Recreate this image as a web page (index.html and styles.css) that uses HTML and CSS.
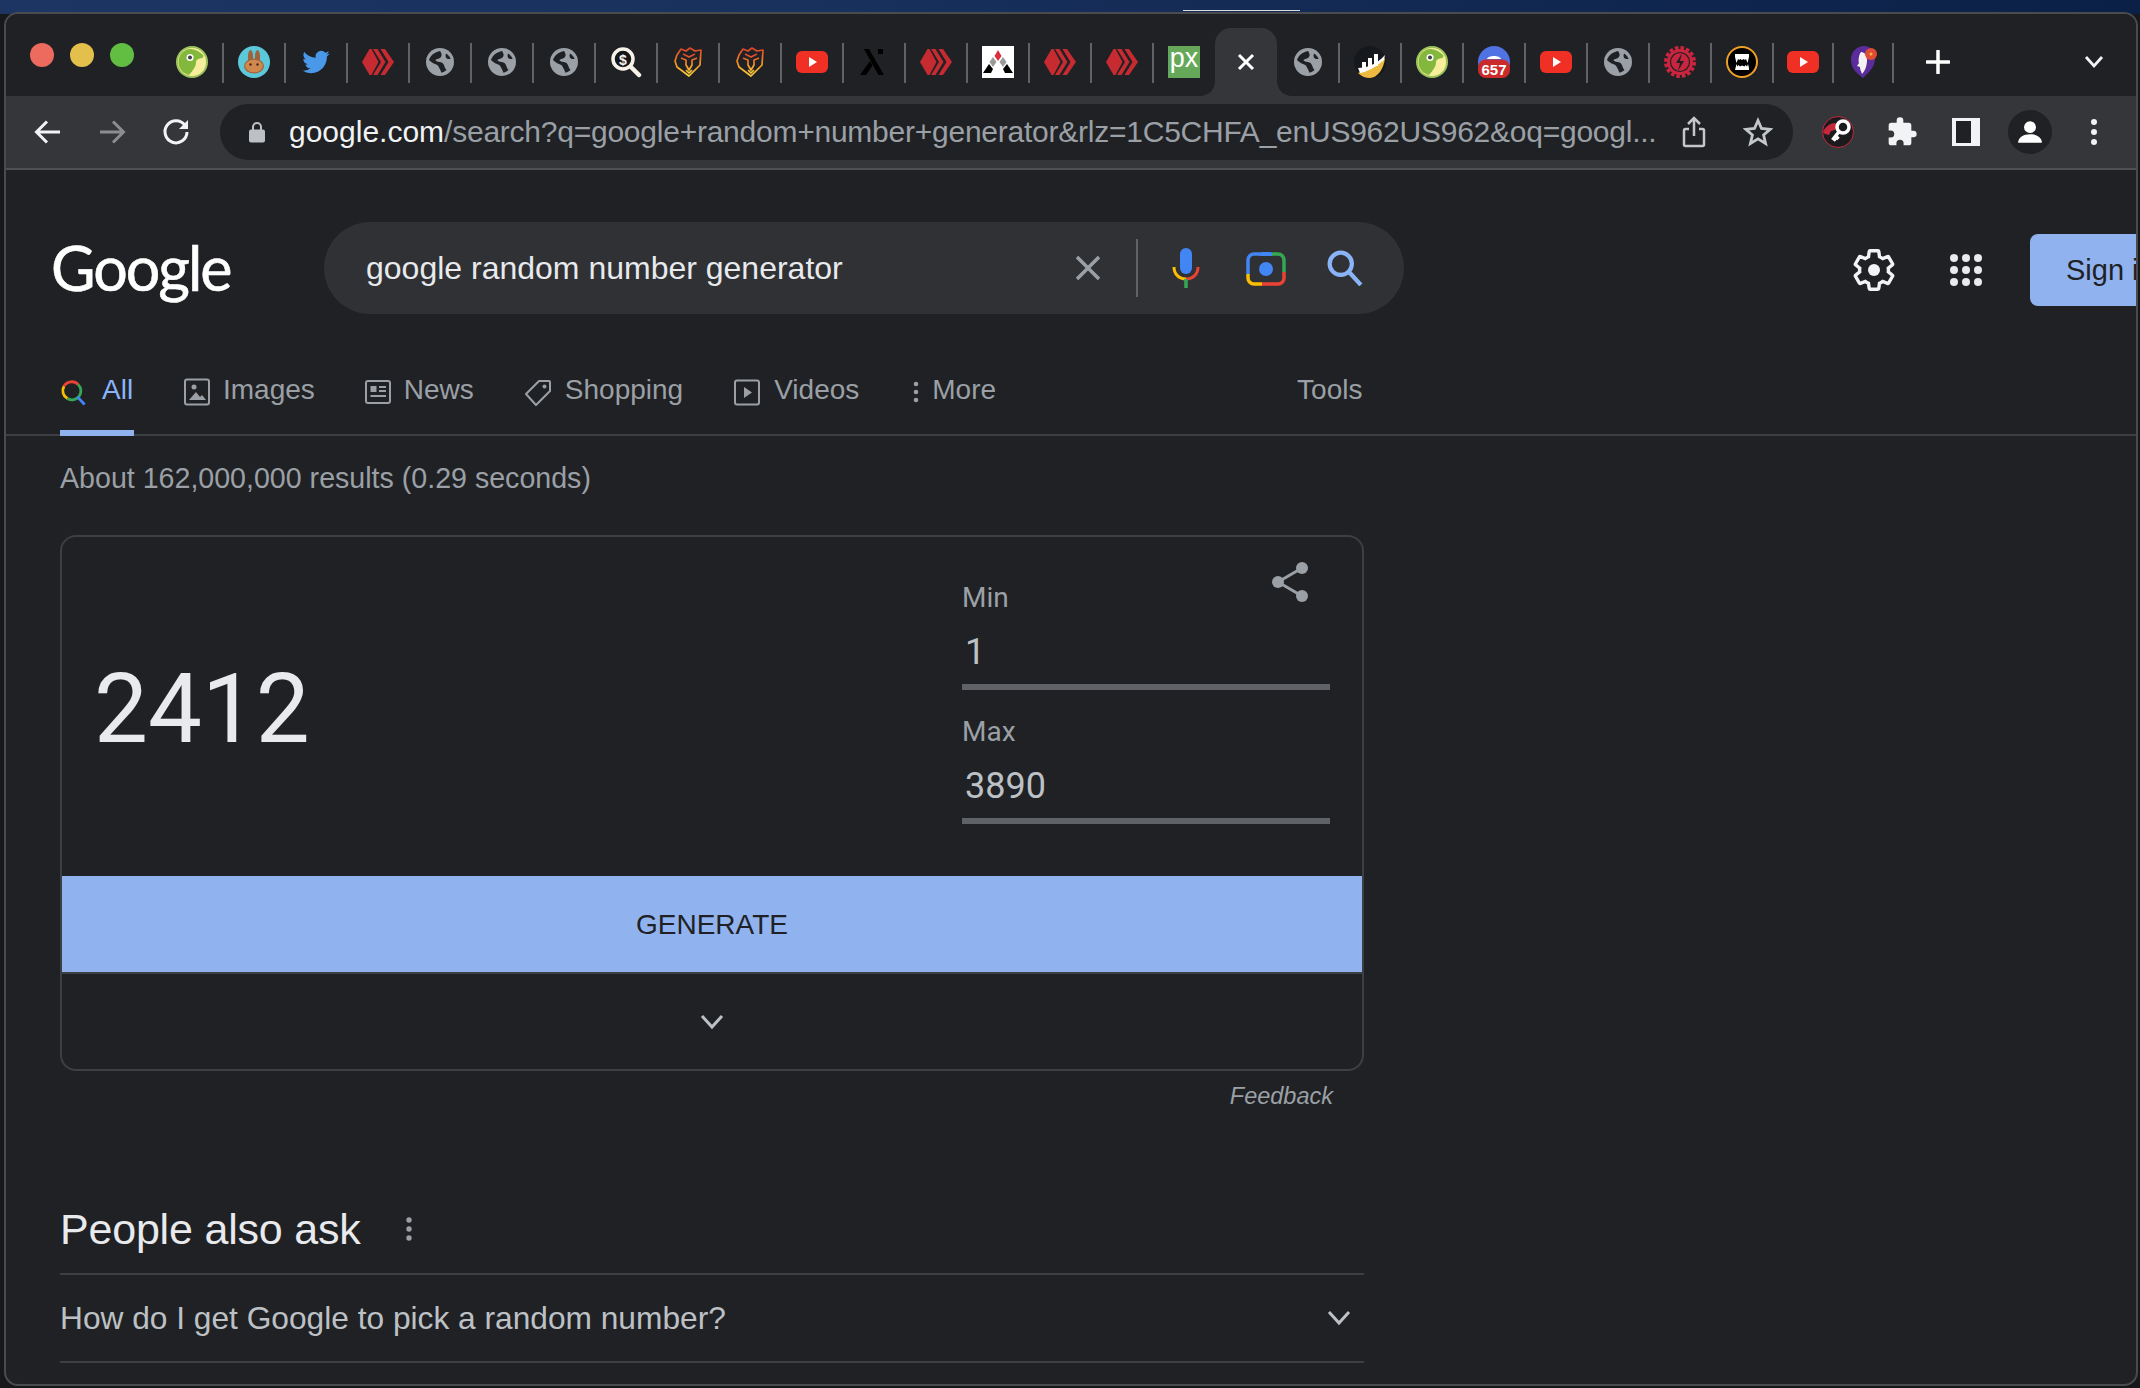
FILE: index.html
```html
<!DOCTYPE html>
<html lang="en">
<head>
<meta charset="utf-8">
<title>google random number generator - Google Search</title>
<link rel="stylesheet" href="styles.css">
</head>
<body>
<svg class="defs" aria-hidden="true">
  <defs>
    <linearGradient id="lionGrad" x1="0" y1="0" x2="0" y2="1">
      <stop offset="0" stop-color="#d8432a"/><stop offset="0.5" stop-color="#f08a24"/><stop offset="1" stop-color="#f7cf3c"/>
    </linearGradient>
    <symbol id="gecko" viewBox="0 0 32 32">
      <circle cx="16" cy="16" r="16" fill="#9cc25c"/><circle cx="16" cy="16" r="14" fill="#f6ee9c"/>
      <path d="M2.500 17C2 8 9 2.500 15 3c5 .4 9 3 12.500 6.500l-.5 2c-4 1.500-7 1.500-7 5 0 4-3 8-7 12.500C7 27.500 3 23 2.500 17Z" fill="#83b83c"/>
      <circle cx="14" cy="11.500" r="3.500" fill="#fff"/><circle cx="14" cy="11.500" r="2" fill="#444"/>
    </symbol>
    <symbol id="pancake" viewBox="0 0 32 32">
      <circle cx="16" cy="16" r="16" fill="#5cc9da"/>
      <ellipse cx="12.500" cy="11" rx="2.600" ry="7" fill="#a0623a"/><ellipse cx="19.500" cy="11" rx="2.600" ry="7" fill="#a0623a"/>
      <ellipse cx="16" cy="20" rx="10" ry="7.500" fill="#a0623a"/><ellipse cx="16" cy="20" rx="8.800" ry="6.300" fill="#d0884f"/>
      <circle cx="12.500" cy="18.500" r="1.200" fill="#44281a"/><circle cx="19.500" cy="18.500" r="1.200" fill="#44281a"/>
    </symbol>
    <symbol id="twitter" viewBox="-2 -2 28 28">
      <path fill="#4a99e9" d="M23.950 4.570a10 10 0 0 1-2.820.77 4.960 4.960 0 0 0 2.160-2.720c-.95.55-2 .96-3.130 1.200a4.920 4.920 0 0 0-8.390 4.480C7.690 8.100 4.070 6.130 1.640 3.160a4.920 4.920 0 0 0 1.520 6.570 4.900 4.900 0 0 1-2.230-.61v.06a4.920 4.920 0 0 0 3.950 4.830 5 5 0 0 1-2.210.08 4.940 4.940 0 0 0 4.600 3.420A9.870 9.870 0 0 1 0 19.540a13.940 13.940 0 0 0 7.550 2.210c9.050 0 14-7.500 14-13.980 0-.21 0-.42-.02-.63a9.940 9.940 0 0 0 2.460-2.570z"/>
    </symbol>
    <symbol id="hive" viewBox="0 0 32 32">
      <polygon fill="#c52b30" points="0,16 7.500,3 9.500,3 16.500,16 9.500,29 7.500,29"/>
      <polygon fill="#c52b30" points="11,3 15.500,3 23.500,16 15.500,29 11,29 19,16"/>
      <polygon fill="#c52b30" points="18.500,3 23,3 32,16 23,29 18.500,29 26.500,16"/>
    </symbol>
    <symbol id="globe" viewBox="0 0 32 32">
      <circle cx="16" cy="16" r="14" fill="#9aa0a6"/>
      <path fill="#202124" d="M5 14C6.500 9 11 6 16 5c1.500 2 2.500 4.500.5 6.500-2 1.800-4.500 1-5 3 2 2 5.500.8 7.500 3 1.600 2 1.500 4.500 3.500 6.500-1.500 1.300-3.200 2.200-5 2.700-1-2.500-2-4.700-3.300-6.700C13 18 8.500 18 5 14Z"/>
      <path fill="#202124" d="M22 7.500c2 1.200 3.700 3 4.700 5.200-1.700.4-3.700.3-4.700-1-.7-1.200-.5-2.800 0-4.200Z"/>
    </symbol>
    <symbol id="dollar" viewBox="0 0 32 32">
      <circle cx="13" cy="13" r="10" fill="#15161a" stroke="#f7f2e8" stroke-width="3.500"/>
      <path d="M21 21l8 8" stroke="#f7f2e8" stroke-width="4.500" stroke-linecap="round"/>
      <text x="13" y="18.500" text-anchor="middle" class="svg-dollar">$</text>
    </symbol>
    <symbol id="lion" viewBox="0 0 32 32">
      <g fill="none" stroke="url(#lionGrad)" stroke-width="1.700" stroke-linejoin="round">
        <path d="M5 9 9 3l5 2 4-3 5 3 6-1-1 15-11 11L5 21l-2-6Z"/>
        <path d="M9 12l5 2v5l3 5 3-5v-5l5-2M11 8l6 3 6-3M14 24l3 3 3-3"/>
      </g>
    </symbol>
    <symbol id="yt" viewBox="0 0 32 32">
      <rect x="0" y="5" width="32" height="22" rx="6" fill="#f03024"/>
      <polygon points="13,11 13,21 21,16" fill="#fff"/>
    </symbol>
    <symbol id="xglyph" viewBox="0 0 32 32">
      <path d="M6 3h5l15 26h-5.500L6 3Z" fill="#000"/><path d="M2 29l10-14 2.500 4.500L8 29H2Z" fill="#000"/><rect x="20" y="3" width="5" height="5" fill="#000"/>
    </symbol>
    <symbol id="arc" viewBox="0 0 32 32">
      <rect width="32" height="32" fill="#fff"/>
      <polygon points="16,4 19.500,10 16,15 12.500,10" fill="#d9303c"/>
      <polygon points="11,11 14.500,16 11,21 7.500,16" fill="#9a9a9a"/><polygon points="21,11 24.500,16 21,21 17.500,16" fill="#9a9a9a"/>
      <polygon points="7,18 11,23 9,27 1,27" fill="#000"/><polygon points="25,18 21,23 23,27 31,27" fill="#000"/>
    </symbol>
    <symbol id="px" viewBox="0 0 32 32">
      <rect width="32" height="32" fill="#66a85a"/>
      <text x="16" y="21" text-anchor="middle" class="svg-px">px</text>
    </symbol>
    <symbol id="chart" viewBox="0 0 32 32">
      <circle cx="16" cy="16" r="16" fill="#15181c"/>
      <path d="M4 27c9-3 17-7 27-15-1 11-8 20-15 20-5 0-9-2-12-5Z" fill="#edb93e"/>
      <path d="M4 22c8 0 18-3 27-13l-1 5C22 21 13 26 6 27Z" fill="#fff"/>
      <rect x="8" y="16" width="4" height="8" fill="#fff"/><rect x="14" y="12" width="4" height="11" fill="#fff"/><rect x="20" y="8" width="4" height="12" fill="#fff"/>
    </symbol>
    <symbol id="count" viewBox="0 0 32 32">
      <circle cx="16" cy="16" r="16" fill="#4f73e3"/>
      <path d="M9 13c1-4 13-4 14 0Z" fill="#fff"/>
      <rect y="13.500" width="32" height="18.500" rx="8" fill="#cb2a2b"/>
      <text x="16" y="29" text-anchor="middle" class="svg-count">657</text>
    </symbol>
    <symbol id="bolt" viewBox="0 0 32 32">
      <circle cx="16" cy="16" r="14" fill="none" stroke="#c9253f" stroke-width="4" stroke-dasharray="3.500 2"/>
      <circle cx="16" cy="16" r="13" fill="#c9253f"/><circle cx="16" cy="16" r="9.500" fill="none" stroke="#202124" stroke-width="1.200"/>
      <path d="M18 7l-6 10h4l-2 8 6-10h-4Z" fill="#202124"/>
    </symbol>
    <symbol id="monster" viewBox="0 0 32 32">
      <circle cx="16" cy="16" r="15" fill="#000" stroke="#f0a028" stroke-width="2"/>
      <path d="M9 8h14v3l-1.500 6-1.500-4-1.200 1-1-1-1.800 1-1.800-1-1 1-1.200-1L10.500 17 9 11Z" fill="#fff"/>
      <path d="M9 24h14v-2l-1-4-1 2.500-1.500-1.500-1 1.500-2.500-1-2 1-1.500-1.500-1 1.500-1-2.500-1 4Z" fill="#fff"/>
    </symbol>
    <symbol id="woman" viewBox="0 0 32 32">
      <path d="M16 32C8 26 4 22 4 13 4 6 10 0 17 0c7 0 11 6 11 13 0 8-6 13-12 19Z" fill="#5b2d9c"/>
      <path d="M14 6c4 0 6 4 6 8 0 6-2 11-5 14-1-3-2-4-2-7l-3-1 2-3c-1-2 0-9 2-11Z" fill="#f5f1f3"/>
      <circle cx="24" cy="8" r="6" fill="#df4c34"/><circle cx="24" cy="8" r="1.500" fill="#f4b04a"/>
    </symbol>
    <symbol id="key" viewBox="0 0 32 32">
      <circle cx="16" cy="16" r="15.500" fill="#1b1b1e" stroke="#c4283a" stroke-width="1"/>
      <path d="M1 16c2-5 7-9 12-9l3 3-3 4-4 1-2 4-4-1Z" fill="#c4283a"/>
      <circle cx="21" cy="11" r="6" fill="none" stroke="#fff" stroke-width="3.500"/>
      <path d="M17.500 15l-7 9m3-4 3 3m-5-1 2.500 2.500" stroke="#fff" stroke-width="3.500" fill="none"/>
    </symbol>
  </defs>
</svg>

<div class="desk-mark"></div>

<div class="window">
  <header class="tabstrip">
    <div class="lights"><span class="light red"></span><span class="light amber"></span><span class="light green"></span></div>
    <div class="tabs">
      <div class="tab"><svg class="fav"><use href="#gecko"/></svg></div>
      <div class="tab"><svg class="fav"><use href="#pancake"/></svg></div>
      <div class="tab"><svg class="fav"><use href="#twitter"/></svg></div>
      <div class="tab"><svg class="fav"><use href="#hive"/></svg></div>
      <div class="tab"><svg class="fav"><use href="#globe"/></svg></div>
      <div class="tab"><svg class="fav"><use href="#globe"/></svg></div>
      <div class="tab"><svg class="fav"><use href="#globe"/></svg></div>
      <div class="tab"><svg class="fav"><use href="#dollar"/></svg></div>
      <div class="tab"><svg class="fav"><use href="#lion"/></svg></div>
      <div class="tab"><svg class="fav"><use href="#lion"/></svg></div>
      <div class="tab"><svg class="fav"><use href="#yt"/></svg></div>
      <div class="tab"><svg class="fav"><use href="#xglyph"/></svg></div>
      <div class="tab"><svg class="fav"><use href="#hive"/></svg></div>
      <div class="tab"><svg class="fav"><use href="#arc"/></svg></div>
      <div class="tab"><svg class="fav"><use href="#hive"/></svg></div>
      <div class="tab"><svg class="fav"><use href="#hive"/></svg></div>
      <div class="tab no-sep"><svg class="fav"><use href="#px"/></svg></div>
      <div class="tab active no-sep"><svg class="tab-close" viewBox="0 0 20 20"><path d="M3 3l14 14M17 3L3 17"/></svg></div>
      <div class="tab"><svg class="fav"><use href="#globe"/></svg></div>
      <div class="tab"><svg class="fav"><use href="#chart"/></svg></div>
      <div class="tab"><svg class="fav"><use href="#gecko"/></svg></div>
      <div class="tab"><svg class="fav"><use href="#count"/></svg></div>
      <div class="tab"><svg class="fav"><use href="#yt"/></svg></div>
      <div class="tab"><svg class="fav"><use href="#globe"/></svg></div>
      <div class="tab"><svg class="fav"><use href="#bolt"/></svg></div>
      <div class="tab"><svg class="fav"><use href="#monster"/></svg></div>
      <div class="tab narrow"><svg class="fav"><use href="#yt"/></svg></div>
      <div class="tab narrow"><svg class="fav"><use href="#woman"/></svg></div>
    </div>
    <svg class="newtab" viewBox="0 0 24 24"><path d="M12 1v22M1 12h22"/></svg>
    <svg class="tablist" viewBox="0 0 20 14"><path d="M2 2l8 9 8-9"/></svg>
  </header>

  <nav class="toolbar">
    <div class="tb-btn"><svg class="tb-ico" viewBox="0 0 28 28"><path class="st-w" d="M26 14H3M13 3.500 2.500 14 13 24.500"/></svg></div>
    <div class="tb-btn"><svg class="tb-ico" viewBox="0 0 28 28"><path class="st-g" d="M2 14h23M15 3.500 25.500 14 15 24.500"/></svg></div>
    <div class="tb-btn"><svg class="tb-ico" viewBox="0 0 28 28"><path class="st-w" d="M23 7.500A11 11 0 1 0 25 14"/><polygon points="26,2 26,11 17,11" fill="#f1f3f4"/></svg></div>
    <div class="omnibox">
      <svg class="lock" viewBox="0 0 16 22"><path d="M4 9V6a4 4 0 0 1 8 0v3" fill="none" stroke="#bdc1c6" stroke-width="2"/><rect y="8.500" width="16" height="13" rx="2" fill="#bdc1c6"/></svg>
      <div class="url"><span class="url-host">google.com</span>/search?q=google+random+number+generator&amp;rlz=1C5CHFA_enUS962US962&amp;oq=googl...</div>
      <svg class="omni-share" viewBox="0 0 24 32"><path d="M12 20V2M6 8l6-6 6 6M7 13H3.500A1.500 1.500 0 0 0 2 14.500v14A1.500 1.500 0 0 0 3.500 30h17a1.500 1.500 0 0 0 1.500-1.500v-14a1.500 1.500 0 0 0-1.500-1.500H17"/></svg>
      <svg class="omni-star" viewBox="0 0 30 30"><path d="M15 3.500l3.500 8 8.700.8-6.600 5.700 2 8.500L15 21.900 7.400 26.500l2-8.500-6.600-5.700 8.700-.8Z"/></svg>
    </div>
    <div class="tb-right">
      <div class="tb-btn"><svg class="fav"><use href="#key"/></svg></div>
      <div class="tb-btn"><svg class="tb-puzzle" viewBox="0 0 24 24"><path fill="#f1f3f4" d="M20.500 11H19V7a2 2 0 0 0-2-2h-4V3.500a2.500 2.500 0 0 0-5 0V5H4a2 2 0 0 0-2 2v3.800h1.500a2.700 2.700 0 0 1 0 5.400H2V20a2 2 0 0 0 2 2h3.800v-1.500a2.700 2.700 0 0 1 5.400 0V22H17a2 2 0 0 0 2-2v-4h1.500a2.500 2.500 0 0 0 0-5Z"/></svg></div>
      <div class="tb-btn"><div class="panel-ico"></div></div>
      <div class="tb-btn"><div class="avatar"><svg class="avatar-ico" viewBox="0 0 24 24"><circle cx="12" cy="7.500" r="5.500" fill="#fff"/><path d="M1 22c0-5 5-8 11-8s11 3 11 8Z" fill="#fff"/></svg></div></div>
      <div class="tb-btn"><svg class="tb-dots" viewBox="0 0 8 28"><circle cx="4" cy="4" r="3"/><circle cx="4" cy="14" r="3"/><circle cx="4" cy="24" r="3"/></svg></div>
    </div>
  </nav>

  <main class="page">
    <div class="search-row">
      <div class="logo">Google</div>
      <div class="searchbox">
        <div class="query">google random number generator</div>
        <svg class="clear" viewBox="0 0 28 28"><path d="M3 3l22 22M25 3 3 25"/></svg>
        <div class="sb-divider"></div>
        <svg class="mic" viewBox="0 0 28 40">
          <rect x="8" y="0" width="12" height="26" rx="6" fill="#4285f4"/>
          <path d="M2 19c0 7 5 12 12 12" fill="none" stroke="#fbbc04" stroke-width="3"/>
          <path d="M26 19c0 7-5 12-12 12" fill="none" stroke="#ea4335" stroke-width="3"/>
          <path d="M14 31v9" stroke="#34a853" stroke-width="3.500"/>
        </svg>
        <svg class="lens" viewBox="0 0 40 36">
          <path d="M13 6l3-4h8l3 4Z" fill="#4285f4"/>
          <path d="M2 24V10a6 6 0 0 1 6-6h6" fill="none" stroke="#4285f4" stroke-width="3.500"/>
          <path d="M14 4h12" stroke="#4285f4" stroke-width="3.500"/>
          <path d="M26 4h6a6 6 0 0 1 6 6v12" fill="none" stroke="#34a853" stroke-width="3.500"/>
          <path d="M2 24v4a6 6 0 0 0 6 6h8" fill="none" stroke="#fbbc04" stroke-width="3.500"/>
          <path d="M16 34h16a6 6 0 0 0 6-6v-6" fill="none" stroke="#ea4335" stroke-width="3.500"/>
          <circle cx="20" cy="19" r="7" fill="#4285f4"/>
        </svg>
        <svg class="sb-search" viewBox="0 0 34 34"><circle cx="13" cy="13" r="10.500" fill="none"/><path d="M21 21l11 12"/></svg>
      </div>
      <div class="header-tools">
        <svg class="gear" viewBox="0 0 24 24"><path d="M19.140 12.940c.04-.3.06-.61.06-.94 0-.32-.02-.64-.07-.94l2.030-1.580c.18-.14.23-.41.12-.61l-1.920-3.320c-.12-.22-.37-.29-.59-.22l-2.390.96c-.5-.38-1.030-.7-1.620-.94l-.36-2.540c-.04-.24-.24-.41-.48-.41h-3.840c-.24 0-.43.17-.47.41l-.36 2.540c-.59.24-1.130.57-1.620.94l-2.390-.96c-.22-.08-.47 0-.59.22L2.740 8.870c-.12.21-.08.47.12.61l2.030 1.580c-.05.3-.09.63-.09.94s.02.64.07.94l-2.030 1.580c-.18.14-.23.41-.12.61l1.920 3.320c.12.22.37.29.59.22l2.390-.96c.5.38 1.030.7 1.620.94l.36 2.540c.05.24.24.41.48.41h3.840c.24 0 .44-.17.47-.41l.36-2.540c.59-.24 1.130-.56 1.620-.94l2.390.96c.22.08.47 0 .59-.22l1.920-3.320c.12-.22.07-.47-.12-.61l-2.010-1.580z"/><circle cx="12" cy="12" r="3" class="gear-core"/></svg>
        <svg class="apps" viewBox="0 0 32 32"><circle cx="4" cy="4" r="4"/><circle cx="16" cy="4" r="4"/><circle cx="28" cy="4" r="4"/><circle cx="4" cy="16" r="4"/><circle cx="16" cy="16" r="4"/><circle cx="28" cy="16" r="4"/><circle cx="4" cy="28" r="4"/><circle cx="16" cy="28" r="4"/><circle cx="28" cy="28" r="4"/></svg>
        <div class="signin">Sign in</div>
      </div>
    </div>

    <div class="gnav">
      <div class="nav-item current">
        <svg class="nav-ico" viewBox="0 0 28 28" fill="none" stroke-width="3"><path d="M4.300 7.800A9.500 9.500 0 0 1 19.500 6" stroke="#ea4335"/><path d="M4.300 7.800A9.500 9.500 0 0 0 8 21" stroke="#fbbc04"/><path d="M19.500 6A9.500 9.500 0 0 1 8 21" stroke="#34a853"/><path d="M18.500 19l8 8.500" stroke="#4285f4"/></svg>
        <span>All</span>
      </div>
      <div class="nav-item">
        <svg class="nav-ico" viewBox="0 0 26 28" fill="none" stroke="#9aa0a6" stroke-width="2"><rect x="1" y="1.500" width="24" height="25" rx="2"/><circle cx="10" cy="9" r="2.500" fill="#9aa0a6" stroke="none"/><path d="M5 22l7-8 4 5 2-2 4 5Z" fill="#9aa0a6" stroke="none"/></svg>
        <span>Images</span>
      </div>
      <div class="nav-item">
        <svg class="nav-ico" viewBox="0 0 26 28" fill="none" stroke="#9aa0a6" stroke-width="2"><rect x="1" y="3" width="24" height="22" rx="2"/><rect x="5.500" y="8" width="6" height="6" fill="#9aa0a6" stroke="none"/><path d="M14 9h7M14 13h7M5.500 18h15.500"/></svg>
        <span>News</span>
      </div>
      <div class="nav-item">
        <svg class="nav-ico tag" viewBox="0 0 28 28" fill="none" stroke="#9aa0a6" stroke-width="2"><path d="M2 16 15 3h10a1 1 0 0 1 1 1v9L12 27Z" stroke-linejoin="round"/><circle cx="20.500" cy="8.500" r="2" fill="#9aa0a6" stroke="none"/></svg>
        <span>Shopping</span>
      </div>
      <div class="nav-item videos">
        <svg class="nav-ico" viewBox="0 0 26 28" fill="none" stroke="#9aa0a6" stroke-width="2"><rect x="1" y="2.500" width="24" height="24" rx="2"/><polygon points="10,9 10,20 18,14.500" fill="#9aa0a6" stroke="none"/></svg>
        <span>Videos</span>
      </div>
      <div class="nav-item more">
        <svg class="nav-dots" viewBox="0 0 6 24"><circle cx="3" cy="4" r="2.300"/><circle cx="3" cy="12" r="2.300"/><circle cx="3" cy="20" r="2.300"/></svg>
        <span>More</span>
      </div>
      <div class="nav-item tools"><span>Tools</span></div>
    </div>

    <div class="content">
      <div class="stats">About 162,000,000 results (0.29 seconds)</div>

      <section class="card">
        <svg class="rng-share" viewBox="0 0 36 40"><path d="M6 20 30 6M6 20l24 14"/><circle cx="6" cy="20" r="6"/><circle cx="30" cy="6" r="6"/><circle cx="30" cy="34" r="6"/></svg>
        <div class="rng-top">
          <div class="rng-value">2412</div>
          <div class="rng-inputs">
            <div class="field-label">Min</div>
            <div class="field-value">1</div>
            <div class="field-label second">Max</div>
            <div class="field-value">3890</div>
          </div>
        </div>
        <div class="generate">GENERATE</div>
        <div class="rng-foot"><svg class="chev" viewBox="0 0 24 16"><path d="M2 2l10 11L22 2"/></svg></div>
      </section>
      <div class="feedback">Feedback</div>

      <div class="paa-head">
        <h2 class="paa-title">People also ask</h2>
        <svg class="paa-dots" viewBox="0 0 6 24"><circle cx="3" cy="3" r="2.700"/><circle cx="3" cy="12" r="2.700"/><circle cx="3" cy="21" r="2.700"/></svg>
      </div>
      <div class="paa-row">
        <span>How do I get Google to pick a random number?</span>
        <svg class="paa-chev" viewBox="0 0 24 16"><path d="M2 2l10 11L22 2"/></svg>
      </div>
    </div>
  </main>
</div>
</body>
</html>
```

FILE: styles.css
```css
* { box-sizing: border-box; }
html, body { margin: 0; height: 100%; }
body {
  width: 2140px;
  height: 1388px;
  overflow: hidden;
  padding: 12px 0 0 4px;
  font-family: "Liberation Sans", Arial, sans-serif;
  background:
    linear-gradient(90deg, #1d3563 0%, #17305c 40%, #0b2046 100%) top / 100% 14px no-repeat,
    #17181b;
}
.defs { position: absolute; width: 0; height: 0; }
.svg-dollar { font: 700 14px "Liberation Sans", sans-serif; fill: #f7f2e8; }
.svg-px { font: 400 27px "Liberation Sans", sans-serif; fill: #fff; }
.svg-count { font: 700 15px "Liberation Sans", sans-serif; fill: #fff; }
.desk-mark { position: absolute; left: 1183px; top: 10px; width: 117px; height: 1px; background: #d8dce0; }

.window {
  width: 2134px;
  height: 1374px;
  border: 2px solid #4a4b4f;
  border-radius: 14px;
  overflow: hidden;
  display: flex;
  flex-direction: column;
  background: #202124;
}

/* Tab strip */
.tabstrip {
  height: 82px;
  flex: none;
  background: #202124;
  display: flex;
  align-items: flex-end;
  padding-left: 24px;
}
.lights { display: flex; gap: 16px; width: 131px; height: 68px; align-items: center; margin-bottom: 7px; flex: none; }
.light { width: 24px; height: 24px; border-radius: 50%; }
.red { background: #ec6a5e; }
.amber { background: #e3bf4b; }
.green { background: #62be43; }
.tabs { display: flex; flex: none; }
.tab {
  width: 62px;
  height: 68px;
  position: relative;
  display: flex;
  align-items: center;
  justify-content: center;
  flex: none;
}
.tab::after {
  content: "";
  position: absolute;
  right: -1px;
  top: 15px;
  width: 2px;
  height: 40px;
  background: #5f6368;
}
.tab.no-sep::after { display: none; }
.tab.narrow { width: 60px; }
.fav { width: 32px; height: 32px; display: block; }
.tab.active {
  background: #35363a;
  border-radius: 16px 16px 0 0;
}
.tab.active::before {
  content: "";
  position: absolute;
  left: -14px;
  bottom: 0;
  width: 14px;
  height: 14px;
  background: radial-gradient(circle at 0 0, transparent 13.500px, #35363a 14px);
}
.tab.active::after {
  display: block;
  left: 100%;
  right: auto;
  top: auto;
  bottom: 0;
  width: 14px;
  height: 14px;
  background: radial-gradient(circle at 100% 0, transparent 13.500px, #35363a 14px);
}
.tab-close { width: 20px; height: 20px; fill: none; stroke: #fff; stroke-width: 3; }
.newtab { width: 24px; height: 24px; margin: 0 0 22px 33px; flex: none; fill: none; stroke: #fff; stroke-width: 3.500; stroke-linecap: round; }
.tablist { width: 20px; height: 14px; margin: 0 0 27px 134px; flex: none; fill: none; stroke: #f1f3f4; stroke-width: 2.800; }

/* Toolbar */
.toolbar {
  height: 74px;
  flex: none;
  background: #35363a;
  border-bottom: 2px solid #4e4f53;
  display: flex;
  align-items: center;
  padding-left: 10px;
}
.tb-btn { width: 64px; height: 48px; display: flex; align-items: center; justify-content: center; flex: none; }
.tb-ico { width: 28px; height: 28px; }
.tb-puzzle { width: 32px; height: 32px; }
.st-w, .st-g { fill: none; stroke-width: 3; }
.st-w { stroke: #f1f3f4; }
.st-g { stroke: #8b8d90; }
.omnibox {
  width: 1573px;
  height: 56px;
  margin-left: 12px;
  flex: none;
  background: #202124;
  border-radius: 28px;
  display: flex;
  align-items: center;
  padding-left: 29px;
}
.lock { width: 16px; height: 22px; flex: none; }
.url {
  margin-left: 24px;
  width: 1365px;
  flex: none;
  font-size: 30px;
  letter-spacing: -0.240px;
  white-space: nowrap;
  color: #9aa0a6;
}
.url-host { color: #f1f3f4; letter-spacing: 0; }
.omni-share { width: 24px; height: 32px; margin-left: 28px; flex: none; fill: none; stroke: #c4c7c9; stroke-width: 2.500; }
.omni-star { width: 30px; height: 30px; margin-left: 37px; flex: none; fill: none; stroke: #c4c7c9; stroke-width: 2.800; }
.tb-right { display: flex; margin-left: 13px; flex: none; }
.panel-ico { width: 28px; height: 28px; background: #202124; border: solid #f1f3f4; border-width: 3px 9px 3px 4px; }
.avatar { width: 44px; height: 44px; border-radius: 50%; background: #202124; display: flex; align-items: center; justify-content: center; flex: none; }
.avatar-ico { width: 26px; height: 26px; }
.tb-dots { width: 8px; height: 28px; fill: #f1f3f4; }

/* Page */
.page { flex: 1; min-height: 0; color: #bdc1c6; }
.search-row { display: flex; align-items: center; padding: 52px 0 0 45px; height: 144px; }
.logo {
  width: 273px;
  flex: none;
  font-family: "Lato", sans-serif;
  font-size: 61px;
  line-height: 76px;
  letter-spacing: -2px;
  color: #fff;
  -webkit-text-stroke: 0.6px #fff;
}
.searchbox {
  width: 1080px;
  height: 92px;
  flex: none;
  background: #303134;
  border-radius: 46px;
  display: flex;
  align-items: center;
  padding-left: 42px;
}
.query { width: 708px; flex: none; font-size: 32px; color: #e8eaed; white-space: nowrap; }
.clear { width: 28px; height: 28px; flex: none; fill: none; stroke: #9aa0a6; stroke-width: 3.500; }
.sb-divider { width: 2px; height: 58px; margin-left: 34px; background: #5f6368; flex: none; }
.mic { width: 28px; height: 40px; margin-left: 34px; flex: none; }
.lens { width: 40px; height: 36px; margin-left: 46px; flex: none; }
.sb-search { width: 36px; height: 36px; margin-left: 41px; flex: none; fill: none; stroke: #8ab4f8; stroke-width: 4; }
.header-tools { display: flex; align-items: center; margin: 4px 0 0 446px; flex: none; }
.gear { width: 48px; height: 48px; flex: none; fill: none; stroke: #f1f3f4; stroke-width: 1.700; }
.gear-core { fill: #f1f3f4; stroke: none; }
.apps { width: 32px; height: 32px; margin-left: 52px; flex: none; fill: #e8eaed; }
.signin {
  width: 146px;
  height: 72px;
  margin-left: 48px;
  flex: none;
  background: #90b3f0;
  border-radius: 8px;
  color: #202124;
  font-size: 29px;
  line-height: 72px;
  padding-left: 36px;
  white-space: nowrap;
}

/* Search tabs */
.gnav {
  height: 122px;
  border-bottom: 2px solid #3c4043;
  display: flex;
  align-items: flex-end;
  gap: 50px;
  padding-left: 54px;
  font-size: 28px;
  color: #9aa0a6;
}
.nav-item { height: 62px; line-height: 36px; display: flex; align-items: flex-start; gap: 13px; flex: none; }
.nav-ico { width: 26px; height: 28px; margin-top: 6px; flex: none; }
.nav-ico.tag { width: 28px; }
.current { color: #8ab4f8; height: 66px; margin-bottom: -2px; padding-top: 2px; border-bottom: 6px solid #90b3f0; gap: 16px; width: 74px; }
.videos { margin-left: 1px; gap: 14px; }
.more { gap: 13px; margin-left: 4px; }
.nav-dots { width: 6px; height: 24px; margin-top: 8px; fill: #9aa0a6; }
.tools { margin-left: 251px; }

/* Results */
.content { width: 1304px; margin-left: 54px; }
.stats { margin-top: 24px; height: 36px; font-size: 28.600px; line-height: 36px; color: #9aa0a6; white-space: nowrap; }
.card {
  position: relative;
  margin-top: 39px;
  height: 536px;
  border: 2px solid #3c4043;
  border-radius: 16px;
  overflow: hidden;
  font-family: "Roboto", sans-serif;
}
.rng-share { position: absolute; left: 1210px; top: 25px; width: 36px; height: 40px; fill: #9aa0a6; stroke: #9aa0a6; stroke-width: 3; }
.rng-share circle { stroke: none; }
.rng-top { height: 339px; display: flex; padding-right: 32px; }
.rng-value {
  flex: 1;
  padding: 124px 0 0 32px;
  font-size: 96px;
  line-height: 96px;
  color: #e8eaed;
}
.rng-inputs { width: 368px; flex: none; padding-top: 45px; }
.field-label { font-size: 28px; line-height: 32px; color: #9aa0a6; }
.field-label.second { margin-top: 26px; }
.field-value {
  margin-top: 16px;
  height: 60px;
  padding-left: 3px;
  font-size: 36px;
  line-height: 44px;
  color: #bdc1c6;
  border-bottom: 6px solid #5f6368;
}
.generate {
  height: 98px;
  background: #90b3f0;
  border-bottom: 2px solid #3c4043;
  background-clip: padding-box;
  color: #202124;
  font-family: "Liberation Sans", Arial, sans-serif;
  font-size: 28px;
  line-height: 98px;
  text-align: center;
}
.rng-foot { height: 95px; display: flex; align-items: center; justify-content: center; }
.chev { width: 24px; height: 16px; fill: none; stroke: #bdc1c6; stroke-width: 3; }
.feedback { margin-top: 9px; height: 32px; padding-right: 31px; text-align: right; font-size: 23.500px; line-height: 32px; font-style: italic; color: #9aa0a6; }
.paa-head { margin-top: 91px; height: 70px; display: flex; align-items: flex-start; gap: 45px; }
.paa-title { margin: 0; font-weight: 400; font-size: 43px; line-height: 52px; letter-spacing: -0.200px; color: #e8eaed; white-space: nowrap; }
.paa-dots { width: 6px; height: 24px; margin-top: 14px; fill: #9aa0a6; flex: none; }
.paa-row {
  height: 90px;
  border-top: 2px solid #3c4043;
  border-bottom: 2px solid #3c4043;
  display: flex;
  align-items: center;
  justify-content: space-between;
  padding-right: 13px;
  font-size: 31.700px;
  color: #bdc1c6;
}
.paa-chev { width: 24px; height: 16px; fill: none; stroke: #bdc1c6; stroke-width: 3; flex: none; }
```
